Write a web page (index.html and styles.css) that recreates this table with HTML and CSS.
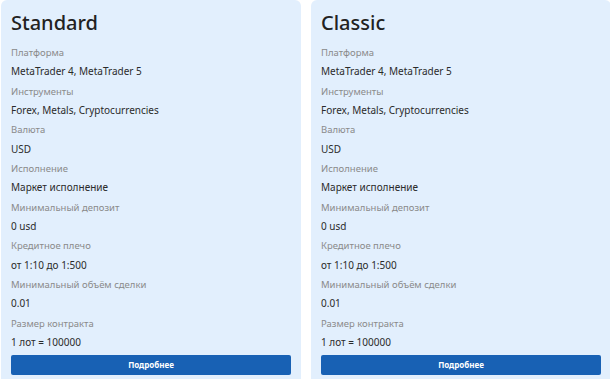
FILE: index.html
```html
<!DOCTYPE html>
<html lang="ru">
<head>
    <meta charset="UTF-8">
    <meta name="viewport" content="width=device-width, initial-scale=1.0">
    <title>Типы счетов</title>
    <link rel="stylesheet" href="styles.css">
</head>
<body>
    <div class="accounts">
        <div class="account-card">
            <h2 class="account-title">Standard</h2>
            <dl class="account-specs">
                <dt>Платформа</dt>
                <dd>MetaTrader 4, MetaTrader 5</dd>
                <dt>Инструменты</dt>
                <dd>Forex, Metals, Cryptocurrencies</dd>
                <dt>Валюта</dt>
                <dd>USD</dd>
                <dt>Исполнение</dt>
                <dd>Маркет исполнение</dd>
                <dt>Минимальный депозит</dt>
                <dd>0 usd</dd>
                <dt>Кредитное плечо</dt>
                <dd>от 1:10 до 1:500</dd>
                <dt>Минимальный объём сделки</dt>
                <dd>0.01</dd>
                <dt>Размер контракта</dt>
                <dd>1 лот = 100000</dd>
            </dl>
            <button class="more-btn">Подробнее</button>
        </div>

        <div class="account-card">
            <h2 class="account-title">Classic</h2>
            <dl class="account-specs">
                <dt>Платформа</dt>
                <dd>MetaTrader 4, MetaTrader 5</dd>
                <dt>Инструменты</dt>
                <dd>Forex, Metals, Cryptocurrencies</dd>
                <dt>Валюта</dt>
                <dd>USD</dd>
                <dt>Исполнение</dt>
                <dd>Маркет исполнение</dd>
                <dt>Минимальный депозит</dt>
                <dd>0 usd</dd>
                <dt>Кредитное плечо</dt>
                <dd>от 1:10 до 1:500</dd>
                <dt>Минимальный объём сделки</dt>
                <dd>0.01</dd>
                <dt>Размер контракта</dt>
                <dd>1 лот = 100000</dd>
            </dl>
            <button class="more-btn">Подробнее</button>
        </div>
    </div>
</body>
</html>
```

FILE: styles.css
```css
* {
    box-sizing: border-box;
}
body {
    font-family: "Noto Sans", Arial, sans-serif;
    background-color: #fff;
    margin: 0;
    padding: 0;
}
.accounts {
    display: flex;
    gap: 10px;
    padding-left: 1px;
    overflow: hidden;
}
.account-card {
    flex: 0 0 300px;
    background-color: #e2effd;
    border-radius: 6px;
    padding: 8px 10px 12px;
    display: flex;
    flex-direction: column;
}
.account-title {
    margin: 0;
    font-size: 20px;
    font-weight: 500;
    line-height: 30px;
    color: #222;
    padding-bottom: 5px;
}
.account-specs {
    margin: 0;
    line-height: 19.35px;
}
.account-specs dt {
    font-size: 9.5px;
    color: #8a8a8a;
}
.account-specs dd {
    margin: 0;
    font-size: 10px;
    color: #2b2b2b;
}
.more-btn {
    margin-top: 2px;
    height: 20px;
    border: none;
    border-radius: 2px;
    background-color: #1861b4;
    color: white;
    font-family: inherit;
    font-size: 8px;
    font-weight: 700;
    cursor: pointer;
}
```
